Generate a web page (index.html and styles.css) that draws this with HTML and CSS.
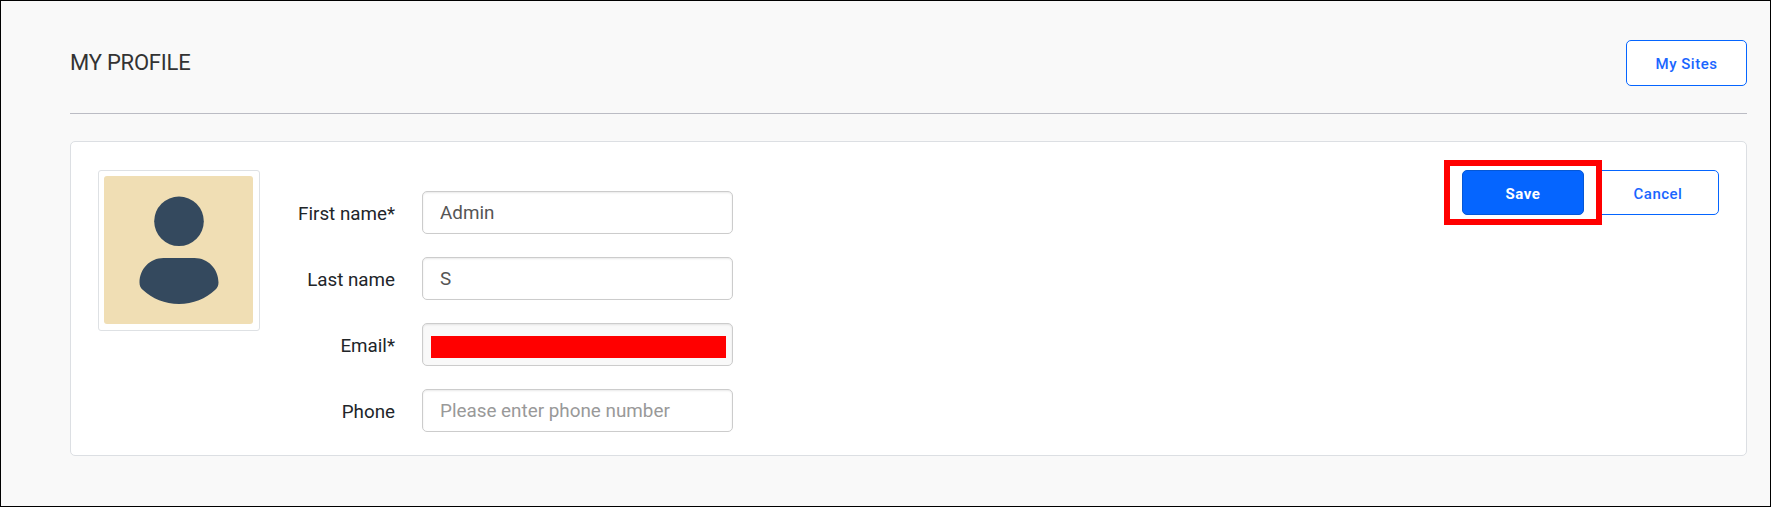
FILE: index.html
```html
<!DOCTYPE html>
<html lang="en">
<head>
<meta charset="utf-8">
<title>My Profile</title>
<link rel="stylesheet" href="styles.css">
</head>
<body>
<main class="page">
  <header class="page-header">
    <h1 class="page-title"><span>MY PROFILE</span></h1>
    <button class="btn btn-sites" type="button"><span>My Sites</span></button>
  </header>
  <section class="card">
    <div class="avatar">
      <svg class="avatar-image" viewBox="0 0 149 148" width="149" height="148" aria-hidden="true">
        <rect width="149" height="148" rx="3" fill="#f0deb4"/>
        <circle cx="75" cy="45.3" r="24.8" fill="#34495e"/>
        <path d="M59.5 82H90.500C104 82 114.500 93 114.500 106.500C114.500 110 113.300 111.800 111 114C102 122.500 89 128 75 128C61 128 48 122.500 39 114C36.500 111.800 35.500 110 35.500 106.500C35.500 93 46 82 59.500 82Z" fill="#34495e"/>
      </svg>
    </div>
    <form class="fields">
      <label class="label" for="first"><span>First name*</span></label>
      <input class="input" id="first" type="text" value="Admin">
      <label class="label" for="last"><span>Last name</span></label>
      <input class="input" id="last" type="text" value="S">
      <label class="label" for="email"><span>Email*</span></label>
      <div class="input input-disabled" id="email"><div class="redaction"></div></div>
      <label class="label" for="phone"><span>Phone</span></label>
      <input class="input" id="phone" type="text" placeholder="Please enter phone number">
    </form>
    <div class="actions">
      <button class="btn btn-save" type="button"><span>Save</span></button>
      <button class="btn btn-cancel" type="button"><span>Cancel</span></button>
      <div class="highlight"></div>
    </div>
  </section>
</main>
</body>
</html>
```
FILE: styles.css
```css
* { box-sizing: border-box; }
body {
  margin: 0;
  font-family: Roboto, "Liberation Sans", sans-serif;
  color: #212529;
}
.page {
  height: 507px;
  padding: 0 23px 0 69px;
  border: 1px solid #000;
  background: #f9f9f9;
}
.page-header {
  display: flex;
  justify-content: space-between;
  align-items: flex-start;
  height: 113px;
  padding-top: 39px;
  border-bottom: 1px solid #bbbcc4;
}
.page-title {
  margin: 0;
  font-size: 22px;
  line-height: 46px;
  font-weight: 400;
  letter-spacing: -0.22px;
  color: #333;
}
.btn {
  width: 122px;
  height: 45px;
  padding: 2px 0 0;
  border: 1px solid #0565ff;
  border-radius: 5px;
  background: #fff;
  color: #1a66ff;
  font: 500 15px Roboto, "Liberation Sans", sans-serif;
  letter-spacing: 0.5px;
}
.btn-sites { width: 121px; height: 46px; }
.btn-save {
  border-color: #0557d6;
  background: #0565ff;
  color: #fff;
  font-weight: 700;
}
.card {
  display: flex;
  align-items: flex-start;
  height: 315px;
  margin-top: 27px;
  padding: 28px 27px 0;
  border: 1px solid #dcdfe3;
  border-radius: 5px;
  background: #fff;
}
.avatar {
  width: 162px;
  height: 161px;
  padding: 5px;
  border: 1px solid #dee1e4;
  border-radius: 3px;
}
.avatar-image { display: block; }
.fields {
  display: grid;
  grid-template-columns: 135px 311px;
  grid-auto-rows: 43px;
  gap: 23px 27px;
  margin-top: 21px;
}
.label {
  font-size: 18.800px;
  line-height: 46px;
  text-align: right;
}
.input {
  width: 311px;
  height: 43px;
  padding: 0 17px;
  border: 1px solid #ccc;
  border-radius: 5px;
  background: #fff;
  box-shadow: inset 0 1px 2px rgba(0, 0, 0, 0.09);
  color: #555;
  font: 400 18.850px Roboto, "Liberation Sans", sans-serif;
}
.input::placeholder { color: #999; opacity: 1; }
.input-disabled {
  padding: 12px 6px 0 8px;
  background: #f9f9f9;
}
.redaction { height: 22px; background: #f00; }
.actions {
  position: relative;
  display: flex;
  gap: 13px;
  margin-left: auto;
}
.highlight {
  position: absolute;
  top: -10px;
  left: -18px;
  width: 158px;
  height: 65px;
  border: 6px solid #f00;
  pointer-events: none;
}
```
